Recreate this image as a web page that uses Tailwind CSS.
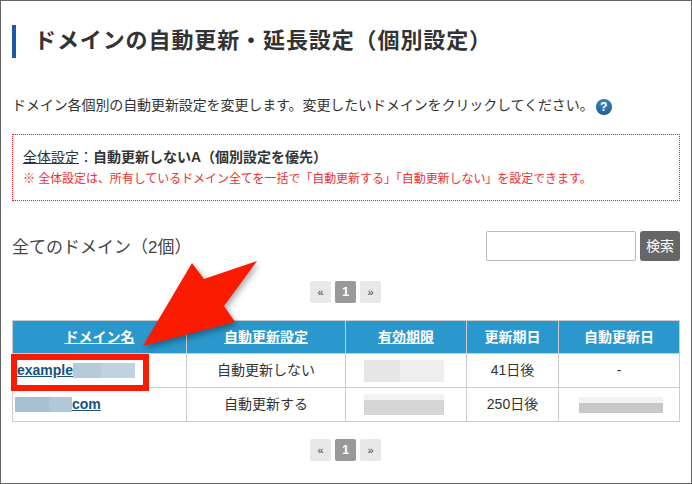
<!DOCTYPE html>
<html lang="ja">
<head>
    <meta charset="UTF-8">
    <title>ドメインの自動更新・延長設定</title>
    <script src="https://cdn.jsdelivr.net/npm/@tailwindcss/browser@4"></script>
</head>
<body class="bg-white font-['Liberation_Sans','Noto_Sans_CJK_JP',sans-serif] text-[#333]">
<div class="relative w-[692px] h-[484px] overflow-hidden border border-[#666] px-[11px] pt-[24px]">

    <!-- 見出し -->
    <h1 class="h-[33px] border-l-[4px] border-[#1a5aa8] pl-[18px] text-[22px] leading-[32px] font-bold tracking-[0.9px] text-[#333]">ドメインの自動更新・延長設定（個別設定）</h1>

    <p class="mt-[37px] h-[20px] flex items-center text-[14px] leading-[20px] text-[#333] tracking-[-0.1px]">
        ドメイン各個別の自動更新設定を変更します。変更したいドメインをクリックしてください。
        <span class="ml-[2px] mt-[3px] w-[16px] h-[16px] rounded-full bg-[radial-gradient(circle_at_50%_30%,#3d8fc4,#12507f)] text-white text-[12px] leading-[16px] font-bold text-center font-['Liberation_Sans']">?</span>
    </p>

    <!-- 全体設定 -->
    <div class="mt-[19px] w-[668px] h-[67px] border border-dotted border-[#e02020] pl-[10px] pt-[12px]">
        <p class="text-[14px] leading-[21px] text-[#333]"><span class="underline">全体設定</span>：<b class="font-bold">自動更新しないA（個別設定を優先）</b></p>
        <p class="text-[12px] leading-[22px] text-[#f03030] tracking-[-0.06px]">※ 全体設定は、所有しているドメイン全てを一括で「自動更新する」「自動更新しない」を設定できます。</p>
    </div>

    <!-- 検索 -->
    <div class="mt-[30px] flex items-center justify-between w-[668px] h-[30px]">
        <h2 class="text-[17px] font-normal text-[#444] mt-[3px]">全てのドメイン（2個）</h2>
        <div class="flex gap-[4px]">
            <input type="text" class="w-[150px] h-[30px] rounded-[2px] border border-[#bbb] bg-white">
            <button class="w-[40px] h-[30px] rounded-[3px] bg-[#666] text-white text-[14px]">検索</button>
        </div>
    </div>

    <!-- ページャー -->
    <div class="mt-[20px] pr-[1px] flex justify-center gap-[4px] h-[22px] w-[668px] text-[11px] leading-[22px] text-center">
        <span class="w-[21px] rounded-[2px] bg-[#e8e8e8] text-[#444]">«</span>
        <span class="w-[21px] rounded-[2px] bg-[#999] text-white font-bold text-[13px]">1</span>
        <span class="w-[21px] rounded-[2px] bg-[#e8e8e8] text-[#444]">»</span>
    </div>

    <!-- ドメイン一覧 -->
    <table class="mt-[17px] w-[668px] table-fixed border-collapse text-center text-[14px] text-[#333]">
        <thead>
            <tr class="h-[33px] bg-[#2b98cd] text-white font-bold">
                <th class="w-[174px] border border-[#ccc] underline">ドメイン名</th>
                <th class="w-[159px] border border-[#ccc] underline">自動更新設定</th>
                <th class="w-[121px] border border-[#ccc] underline">有効期限</th>
                <th class="w-[92px] border border-[#ccc]">更新期日</th>
                <th class="border border-[#ccc]">自動更新日</th>
            </tr>
        </thead>
        <tbody>
            <tr class="h-[34px]">
                <td class="border border-[#ccc] text-left pl-[4px]"><a href="#" class="flex items-center text-[#15537f] font-bold underline">example<span class="w-[62px] h-[15px] bg-[linear-gradient(90deg,#b5cbda_45%,#c0d2df_45%)]"></span></a></td>
                <td class="border border-[#ccc]">自動更新しない</td>
                <td class="border border-[#ccc]"><span class="block ml-[18px] w-[80px] h-[22px] bg-[linear-gradient(90deg,#e6e6e6_45%,#eeeeee_45%)]"></span></td>
                <td class="border border-[#ccc]">41日後</td>
                <td class="border border-[#ccc]">-</td>
            </tr>
            <tr class="h-[34px]">
                <td class="border border-[#ccc] text-left pl-[2px]"><a href="#" class="flex items-center text-[#15537f] font-bold underline"><span class="w-[57px] h-[15px] bg-[linear-gradient(90deg,#a6c0d2_60%,#b0c8d8_60%)]"></span>com</a></td>
                <td class="border border-[#ccc]">自動更新する</td>
                <td class="border border-[#ccc]"><span class="block ml-[18px] w-[80px] h-[21px] bg-[linear-gradient(180deg,#f3f3f3_30%,#d6d6d6_30%)]"></span></td>
                <td class="border border-[#ccc]">250日後</td>
                <td class="border border-[#ccc]"><span class="block ml-[20px] w-[84px] h-[16px] bg-[linear-gradient(180deg,#f3f3f3_35%,#c8c8c8_35%)]"></span></td>
            </tr>
        </tbody>
    </table>

    <div class="mt-[17px] pr-[1px] flex justify-center gap-[4px] h-[22px] w-[668px] text-[11px] leading-[22px] text-center">
        <span class="w-[21px] rounded-[2px] bg-[#e8e8e8] text-[#444]">«</span>
        <span class="w-[21px] rounded-[2px] bg-[#999] text-white font-bold text-[13px]">1</span>
        <span class="w-[21px] rounded-[2px] bg-[#e8e8e8] text-[#444]">»</span>
    </div>

    <!-- 注釈の枠と矢印 -->
    <div class="absolute left-[10px] top-[353px] w-[138px] h-[37px] border-[6px] border-[#f91a00]"></div>
    <svg class="absolute left-[-1px] top-[-1px] drop-shadow-[2px_3px_3px_rgba(0,0,0,0.35)]" width="692" height="484" viewBox="0 0 692 484">
        <polygon points="143,346 192,263 204,279 257,261 224,306 235,322" fill="#f91a00"/>
    </svg>
</div>
</body>
</html>
